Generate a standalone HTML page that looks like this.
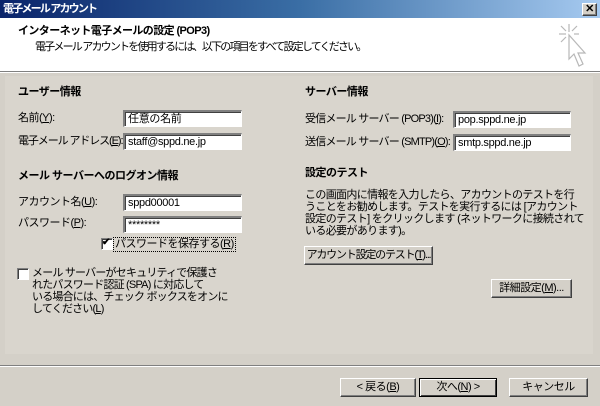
<!DOCTYPE html>
<html><head><meta charset="utf-8"><style>
*{margin:0;padding:0;box-sizing:border-box}
body{width:600px;height:406px;overflow:hidden;background:#d4d0c8;font-family:"Liberation Sans","Noto Sans CJK JP",sans-serif;font-size:11px;color:#000;position:relative}
.a{position:absolute;white-space:nowrap;line-height:13px;letter-spacing:-0.5px}
.b{font-weight:bold}
.in{position:absolute;background:#fff;border-top:2px solid #808080;border-left:2px solid #808080;border-bottom:1px solid #fff;border-right:1px solid #fff;box-shadow:inset 1px 1px 0 #404040;padding:1px 3px;line-height:12px;font-size:11px;height:17px;white-space:nowrap;overflow:hidden;letter-spacing:-0.3px}
.btn{position:absolute;background:#d4d0c8;border:1px solid;border-color:#fff #404040 #404040 #fff;box-shadow:inset -1px -1px 0 #808080;text-align:center;line-height:17px;font-size:11px;white-space:nowrap;letter-spacing:-0.5px}
.cb{position:absolute;width:12px;height:12px;background:#fff;border-top:1px solid #808080;border-left:1px solid #808080;border-bottom:1px solid #fff;border-right:1px solid #fff;box-shadow:inset 1px 1px 0 #404040}
</style></head><body>
<div style="position:absolute;left:0;top:0;width:600px;height:18px;background:linear-gradient(90deg,#0a246a,#3a6ea5 50%,#a6caf0)"></div>
<div class="a b" style="left:3px;top:3px;color:#fff;letter-spacing:-1.8px">電子メール アカウント</div>
<div class="btn" style="left:582px;top:3px;width:15px;height:13px;line-height:11px;font-weight:bold;font-size:11px">✕</div>
<div style="position:absolute;left:0;top:18px;width:600px;height:53px;background:#fff"></div>
<div class="a b" style="left:18px;top:25px;letter-spacing:-0.6px">インターネット電子メールの設定 (POP3)</div>
<div class="a" style="left:35px;top:41px;letter-spacing:-1.8px">電子メール アカウントを使用するには、以下の項目をすべて設定してください。</div>
<svg style="position:absolute;left:556px;top:22px" width="36" height="48" viewBox="0 0 36 48">
<g stroke="#b8b8b8" stroke-width="1.2" fill="none">
<line x1="13" y1="2" x2="13" y2="10"/><line x1="3" y1="12" x2="10" y2="12"/><line x1="5" y1="4" x2="10" y2="9"/><line x1="21" y1="4" x2="16" y2="9"/><line x1="5" y1="20" x2="10" y2="15"/><line x1="18" y1="12" x2="23" y2="12"/>
<path d="M13 13 L13 37 L18 32 L23 44 L27 42 L22 31 L29 31 Z" fill="#fff"/>
</g></svg>
<div style="position:absolute;left:0;top:71px;width:600px;height:1px;background:#808080"></div>
<div style="position:absolute;left:0;top:72px;width:600px;height:1px;background:#fff"></div>
<div style="position:absolute;left:5px;top:76px;width:588px;height:278px;background:#d9d5cd"></div>

<div class="a b" style="left:18px;top:86px">ユーザー情報</div>
<div class="a" style="left:18px;top:112px">名前(<u>Y</u>):</div>
<div class="in" style="left:123px;top:110px;width:119px">任意の名前</div>
<div class="a" style="left:18px;top:135px;letter-spacing:-1.1px">電子メール アドレス(<u>E</u>):</div>
<div class="in" style="left:123px;top:133px;width:119px">staff@sppd.ne.jp</div>
<div class="a b" style="left:18px;top:170px">メール サーバーへのログオン情報</div>
<div class="a" style="left:18px;top:196px">アカウント名(<u>U</u>):</div>
<div class="in" style="left:123px;top:194px;width:119px">sppd00001</div>
<div class="a" style="left:18px;top:217px">パスワード(<u>P</u>):</div>
<div class="in" style="left:123px;top:216px;width:119px">********</div>
<div class="cb" style="left:101px;top:238px"><span style="position:absolute;left:0;top:-2px;font-size:10px;font-weight:bold">✔</span></div>
<div class="a" style="left:113px;top:237px;border:1px dotted #000;padding:0 1px">パスワードを保存する(<u>R</u>)</div>
<div class="cb" style="left:17px;top:268px"></div>
<div class="a" style="left:32px;top:267px;line-height:12px;letter-spacing:-0.8px">メール サーバーがセキュリティで保護さ<br>れたパスワード認証 (SPA) に対応して<br>いる場合には、チェック ボックスをオンに<br>してください(<u>L</u>)</div>

<div class="a b" style="left:305px;top:86px">サーバー情報</div>
<div class="a" style="left:305px;top:113px;letter-spacing:-0.8px">受信メール サーバー (POP3)(<u>I</u>):</div>
<div class="in" style="left:453px;top:111px;width:118px">pop.sppd.ne.jp</div>
<div class="a" style="left:305px;top:136px;letter-spacing:-0.8px">送信メール サーバー (SMTP)(<u>O</u>):</div>
<div class="in" style="left:453px;top:134px;width:118px">smtp.sppd.ne.jp</div>
<div class="a b" style="left:305px;top:167px">設定のテスト</div>
<div class="a" style="left:305px;top:189px;line-height:12px;letter-spacing:-0.65px">この画面内に情報を入力したら、アカウントのテストを行<br>うことをお勧めします。テストを実行するには [アカウント<br>設定のテスト] をクリックします (ネットワークに接続されて<br>いる必要があります)。</div>
<div class="btn" style="left:304px;top:246px;width:129px;height:19px;letter-spacing:-1.2px">アカウント設定のテスト(<u>T</u>)...</div>
<div class="btn" style="left:491px;top:279px;width:81px;height:19px">詳細設定(<u>M</u>)...</div>

<div style="position:absolute;left:0;top:365px;width:600px;height:1px;background:#808080"></div>
<div style="position:absolute;left:0;top:366px;width:600px;height:1px;background:#fff"></div>
<div class="btn" style="left:340px;top:378px;width:76px;height:19px">&lt; 戻る(<u>B</u>)</div>
<div class="btn" style="left:419px;top:378px;width:78px;height:19px;border:1px solid #000;box-shadow:inset 1px 1px 0 #fff,inset -1px -1px 0 #404040">次へ(<u>N</u>) &gt;</div>
<div class="btn" style="left:509px;top:378px;width:79px;height:19px">キャンセル</div>
</body></html>
